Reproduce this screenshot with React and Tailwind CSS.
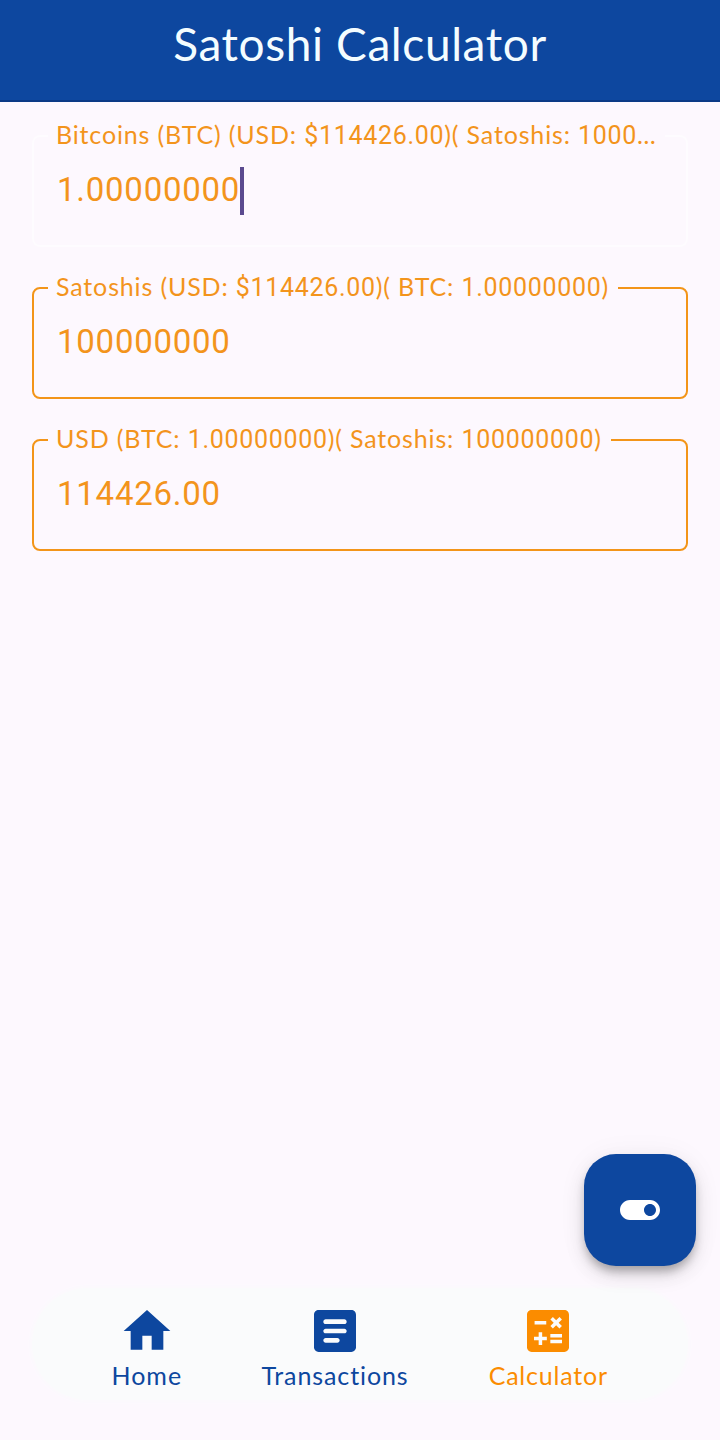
function Label({ text }) {
  return text.split(/([$\d.]+)/).map((part, i) =>
    i % 2 ? (
      <span key={i} className="font-['Roboto',sans-serif] font-normal tracking-[0.7px]">
        {part}
      </span>
    ) : (
      part
    )
  );
}

function Field({ label, value, focused, legendWidth }) {
  return (
    <fieldset
      className={`h-[123px] w-full min-w-0 rounded-[8px] border-2 pl-[14px] ${focused ? "border-white/50" : "border-[#f39519]"}`}
    >
      <legend className={`h-6 px-2 text-[25px] leading-5 whitespace-nowrap text-[#f3941c] ${legendWidth}`}>
        <span className="tracking-[0.85px]">
          <Label text={label} />
        </span>
      </legend>
      <div className="mt-[19px] flex h-12 items-start pl-[9px] text-[33px] leading-[46px]">
        <span className="font-['Roboto',sans-serif] font-normal tracking-[0.75px] text-[#f3941c]">{value}</span>
        {focused && <span className="h-12 w-1 bg-[#5b4a8f]" />}
      </div>
    </fieldset>
  );
}

function Icon({ d, size }) {
  return (
    <svg viewBox="0 0 24 24" className={`${size} block fill-current`}>
      <path fillRule="evenodd" d={d} />
    </svg>
  );
}

const HOME = "M10 20v-6h4v6h5v-8h3L12 3 2 12h3v8z";
const ARTICLE =
  "M19 3H5c-1.1 0-2 .9-2 2v14c0 1.1.9 2 2 2h14c1.1 0 2-.9 2-2V5c0-1.1-.9-2-2-2zM13 17H8c-.55 0-1-.45-1-1s.45-1 1-1h5c.55 0 1 .45 1 1s-.45 1-1 1zM16 13H8c-.55 0-1-.45-1-1s.45-1 1-1h8c.55 0 1 .45 1 1s-.45 1-1 1zM16 9H8c-.55 0-1-.45-1-1s.45-1 1-1h8c.55 0 1 .45 1 1s-.45 1-1 1z";
const CALCULATE =
  "M19 3H5C3.9 3 3 3.9 3 5v14c0 1.1.9 2 2 2h14c1.1 0 2-.9 2-2V5C21 3.9 20.1 3 19 3zM13.03 7.06L14.09 6l1.41 1.41L16.91 6l1.06 1.06-1.41 1.41 1.41 1.41-1.06 1.06L15.5 9.54l-1.41 1.41-1.06-1.06 1.41-1.41L13.03 7.06zM6.25 7.72h5v1.5h-5V7.72zM11.5 16h-2v2H8v-2H6v-1.5h2v-2h1.5v2h2V16zM18 17.25h-5v-1.5h5V17.25zM18 14.75h-5v-1.5h5V14.75z";
const TOGGLE_ON =
  "M17 7H7c-2.76 0-5 2.24-5 5s2.24 5 5 5h10c2.76 0 5-2.24 5-5s-2.24-5-5-5zM17 15c-1.66 0-3-1.34-3-3s1.34-3 3-3 3 1.34 3 3-1.34 3-3 3z";

function NavItem({ icon, label, className, tracking }) {
  return (
    <div className={`flex flex-col items-center ${className}`}>
      <Icon d={icon} size="size-14" />
      <span className={`text-[25px] leading-8 whitespace-nowrap ${tracking}`}>{label}</span>
    </div>
  );
}

export default function App() {
  return (
    <div className="relative flex h-[1440px] w-[720px] flex-col overflow-hidden bg-[#fdf8fe] font-['Lato',sans-serif]">
      <header className="flex h-[102px] shrink-0 justify-center border-b-2 border-[#0b3a86] bg-[#0d479f] pt-4">
        <h1 className="text-[46px] leading-[56px] whitespace-nowrap text-[#f4fdff] tracking-[0.6px]">Satoshi Calculator</h1>
      </header>

      <main className="flex flex-1 flex-col gap-[29px] px-8 pt-[22px]">
        <Field
          focused
          label="Bitcoins (BTC) (USD: $114426.00)( Satoshis: 1000…"
          value="1.00000000"
          legendWidth="w-[617px]"
        />
        <Field
          label="Satoshis (USD: $114426.00)( BTC: 1.00000000)"
          value="100000000"
          legendWidth="w-[570px]"
        />
        <Field
          label="USD (BTC: 1.00000000)( Satoshis: 100000000)"
          value="114426.00"
          legendWidth="w-[563px]"
        />
      </main>

      <nav className="mx-8 mb-10 flex h-28 shrink-0 items-start justify-evenly rounded-[56px] bg-[#fafbfc] pt-[15px] shadow-[0_0_6px_#fafbfc]">
        <NavItem icon={HOME} label="Home" className="w-[69px] text-[#0d479f]" tracking="tracking-[1px]" />
        <NavItem icon={ARTICLE} label="Transactions" className="w-[147px] text-[#0d479f]" tracking="tracking-[0.9px]" />
        <NavItem icon={CALCULATE} label="Calculator" className="w-[119px] text-[#fb8c00]" tracking="tracking-[0.8px]" />
      </nav>

      <button
        aria-label="Toggle"
        className="absolute right-6 bottom-[174px] flex size-28 items-center justify-center rounded-[32px] bg-[#0d479f] text-white shadow-[0_7px_10px_-2px_rgba(0,0,0,0.28),0_10px_20px_0_rgba(0,0,0,0.1),0_2px_30px_0_rgba(0,0,0,0.05)]"
      >
        <Icon d={TOGGLE_ON} size="size-12" />
      </button>
    </div>
  );
}
